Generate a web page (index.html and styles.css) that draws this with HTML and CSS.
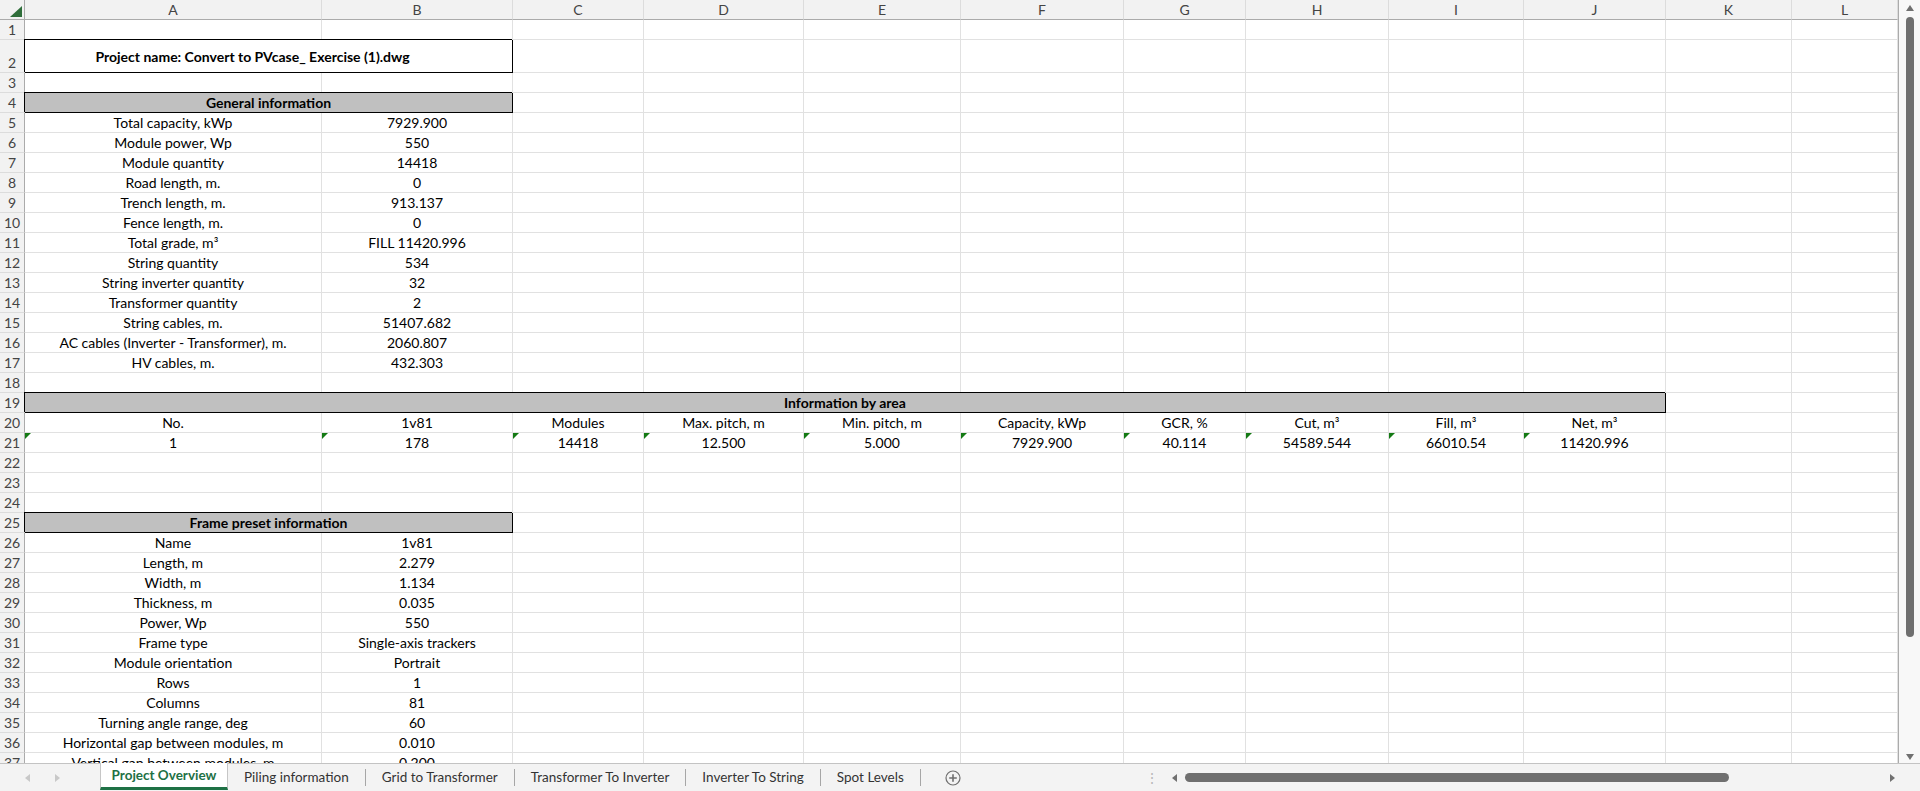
FILE: index.html
```html
<!DOCTYPE html>
<html>
<head>
<meta charset="utf-8">
<title>Project Overview</title>
<link rel="stylesheet" href="styles.css">
</head>
<body>
<div class="app">
  <div class="main">
    <div class="sheet">
      <div class="r hd">
        <div class="corner"><svg width="12" height="11" viewBox="0 0 12 11"><polygon points="12,0 12,11 0,11" fill="#2f6e3a"/></svg></div>
        <div>A</div><div>B</div><div>C</div><div>D</div><div>E</div><div>F</div><div>G</div><div>H</div><div>I</div><div>J</div><div>K</div><div>L</div>
      </div>
      <div class="r"><div class="n">1</div><div></div><div></div><div></div><div></div><div></div><div></div><div></div><div></div><div></div><div></div><div></div><div></div></div>
      <div class="r tall"><div class="n">2</div><div class="box span2 bd title">Project name: Convert to PVcase_ Exercise (1).dwg</div><div></div><div></div><div></div><div></div><div></div><div></div><div></div><div></div><div></div><div></div></div>
      <div class="r"><div class="n">3</div><div></div><div></div><div></div><div></div><div></div><div></div><div></div><div></div><div></div><div></div><div></div><div></div></div>
      <div class="r"><div class="n">4</div><div class="box span2 fill bd">General information</div><div></div><div></div><div></div><div></div><div></div><div></div><div></div><div></div><div></div><div></div></div>
      <div class="r"><div class="n">5</div><div>Total capacity, kWp</div><div>7929.900</div><div></div><div></div><div></div><div></div><div></div><div></div><div></div><div></div><div></div><div></div></div>
      <div class="r"><div class="n">6</div><div>Module power, Wp</div><div>550</div><div></div><div></div><div></div><div></div><div></div><div></div><div></div><div></div><div></div><div></div></div>
      <div class="r"><div class="n">7</div><div>Module quantity</div><div>14418</div><div></div><div></div><div></div><div></div><div></div><div></div><div></div><div></div><div></div><div></div></div>
      <div class="r"><div class="n">8</div><div>Road length, m.</div><div>0</div><div></div><div></div><div></div><div></div><div></div><div></div><div></div><div></div><div></div><div></div></div>
      <div class="r"><div class="n">9</div><div>Trench length, m.</div><div>913.137</div><div></div><div></div><div></div><div></div><div></div><div></div><div></div><div></div><div></div><div></div></div>
      <div class="r"><div class="n">10</div><div>Fence length, m.</div><div>0</div><div></div><div></div><div></div><div></div><div></div><div></div><div></div><div></div><div></div><div></div></div>
      <div class="r"><div class="n">11</div><div>Total grade, m³</div><div>FILL 11420.996</div><div></div><div></div><div></div><div></div><div></div><div></div><div></div><div></div><div></div><div></div></div>
      <div class="r"><div class="n">12</div><div>String quantity</div><div>534</div><div></div><div></div><div></div><div></div><div></div><div></div><div></div><div></div><div></div><div></div></div>
      <div class="r"><div class="n">13</div><div>String inverter quantity</div><div>32</div><div></div><div></div><div></div><div></div><div></div><div></div><div></div><div></div><div></div><div></div></div>
      <div class="r"><div class="n">14</div><div>Transformer quantity</div><div>2</div><div></div><div></div><div></div><div></div><div></div><div></div><div></div><div></div><div></div><div></div></div>
      <div class="r"><div class="n">15</div><div>String cables, m.</div><div>51407.682</div><div></div><div></div><div></div><div></div><div></div><div></div><div></div><div></div><div></div><div></div></div>
      <div class="r"><div class="n">16</div><div>AC cables (Inverter - Transformer), m.</div><div>2060.807</div><div></div><div></div><div></div><div></div><div></div><div></div><div></div><div></div><div></div><div></div></div>
      <div class="r"><div class="n">17</div><div>HV cables, m.</div><div>432.303</div><div></div><div></div><div></div><div></div><div></div><div></div><div></div><div></div><div></div><div></div></div>
      <div class="r"><div class="n">18</div><div></div><div></div><div></div><div></div><div></div><div></div><div></div><div></div><div></div><div></div><div></div><div></div></div>
      <div class="r"><div class="n">19</div><div class="box span10 fill bd">Information by area</div><div></div><div></div></div>
      <div class="r"><div class="n">20</div><div>No.</div><div>1v81</div><div>Modules</div><div>Max. pitch, m</div><div>Min. pitch, m</div><div>Capacity, kWp</div><div>GCR, %</div><div>Cut, m³</div><div>Fill, m³</div><div>Net, m³</div><div></div><div></div></div>
      <div class="r"><div class="n">21</div><div class="t">1</div><div class="t">178</div><div class="t">14418</div><div class="t">12.500</div><div class="t">5.000</div><div class="t">7929.900</div><div class="t">40.114</div><div class="t">54589.544</div><div class="t">66010.54</div><div class="t">11420.996</div><div></div><div></div></div>
      <div class="r"><div class="n">22</div><div></div><div></div><div></div><div></div><div></div><div></div><div></div><div></div><div></div><div></div><div></div><div></div></div>
      <div class="r"><div class="n">23</div><div></div><div></div><div></div><div></div><div></div><div></div><div></div><div></div><div></div><div></div><div></div><div></div></div>
      <div class="r"><div class="n">24</div><div></div><div></div><div></div><div></div><div></div><div></div><div></div><div></div><div></div><div></div><div></div><div></div></div>
      <div class="r"><div class="n">25</div><div class="box span2 fill bd">Frame preset information</div><div></div><div></div><div></div><div></div><div></div><div></div><div></div><div></div><div></div><div></div></div>
      <div class="r"><div class="n">26</div><div>Name</div><div>1v81</div><div></div><div></div><div></div><div></div><div></div><div></div><div></div><div></div><div></div><div></div></div>
      <div class="r"><div class="n">27</div><div>Length, m</div><div>2.279</div><div></div><div></div><div></div><div></div><div></div><div></div><div></div><div></div><div></div><div></div></div>
      <div class="r"><div class="n">28</div><div>Width, m</div><div>1.134</div><div></div><div></div><div></div><div></div><div></div><div></div><div></div><div></div><div></div><div></div></div>
      <div class="r"><div class="n">29</div><div>Thickness, m</div><div>0.035</div><div></div><div></div><div></div><div></div><div></div><div></div><div></div><div></div><div></div><div></div></div>
      <div class="r"><div class="n">30</div><div>Power, Wp</div><div>550</div><div></div><div></div><div></div><div></div><div></div><div></div><div></div><div></div><div></div><div></div></div>
      <div class="r"><div class="n">31</div><div>Frame type</div><div>Single-axis trackers</div><div></div><div></div><div></div><div></div><div></div><div></div><div></div><div></div><div></div><div></div></div>
      <div class="r"><div class="n">32</div><div>Module orientation</div><div>Portrait</div><div></div><div></div><div></div><div></div><div></div><div></div><div></div><div></div><div></div><div></div></div>
      <div class="r"><div class="n">33</div><div>Rows</div><div>1</div><div></div><div></div><div></div><div></div><div></div><div></div><div></div><div></div><div></div><div></div></div>
      <div class="r"><div class="n">34</div><div>Columns</div><div>81</div><div></div><div></div><div></div><div></div><div></div><div></div><div></div><div></div><div></div><div></div></div>
      <div class="r"><div class="n">35</div><div>Turning angle range, deg</div><div>60</div><div></div><div></div><div></div><div></div><div></div><div></div><div></div><div></div><div></div><div></div></div>
      <div class="r"><div class="n">36</div><div>Horizontal gap between modules, m</div><div>0.010</div><div></div><div></div><div></div><div></div><div></div><div></div><div></div><div></div><div></div><div></div></div>
      <div class="r"><div class="n">37</div><div>Vertical gap between modules, m</div><div>0.200</div><div></div><div></div><div></div><div></div><div></div><div></div><div></div><div></div><div></div><div></div></div>
    </div>
    <div class="vs">
      <span class="arr-up"></span>
      <span class="vthumb"></span>
      <span class="grow"></span>
      <span class="arr-down"></span>
    </div>
  </div>
  <div class="tabs">
    <div class="nav"><span class="arr-l light"></span><span class="arr-r light"></span></div>
    <div class="tab active">Project Overview</div>
    <div class="tab">Piling information</div><span class="sep"></span>
    <div class="tab">Grid to Transformer</div><span class="sep"></span>
    <div class="tab">Transformer To Inverter</div><span class="sep"></span>
    <div class="tab">Inverter To String</div><span class="sep"></span>
    <div class="tab">Spot Levels</div><span class="sep"></span>
    <div class="add"><svg width="16" height="16" viewBox="0 0 16 16"><circle cx="8" cy="8" r="7" fill="none" stroke="#6f6f6f" stroke-width="1.2"/><path d="M8 4.2v7.6M4.2 8h7.6" stroke="#6f6f6f" stroke-width="1.6"/></svg></div>
    <div class="hs">
      <span class="dots">⋮</span>
      <span class="arr-l"></span>
      <span class="hthumb"></span>
      <span class="grow"></span>
      <span class="arr-r"></span>
    </div>
  </div>
</div>
</body>
</html>
```
FILE: styles.css
```css
* { box-sizing: border-box; margin: 0; padding: 0; }
html, body { width: 1920px; height: 791px; overflow: hidden; background: #fff; }
body { font-family: Lato, "Open Sans", "Liberation Sans", sans-serif; font-size: 14px; color: #000; }

.app { display: flex; flex-direction: column; height: 791px; }
.main { display: flex; height: 763px; }
.sheet { width: 1898px; height: 763px; overflow: hidden; }

.r {
  display: grid;
  grid-template-columns: 25px 297px 191px 131px 160px 157px 163px 122px 143px 135px 142px 126px 106px;
  height: 20px;
}
.r > div {
  position: relative;
  border-right: 1px solid #e1e1e1;
  border-bottom: 1px solid #e1e1e1;
  display: flex;
  align-items: flex-end;
  justify-content: center;
  padding-bottom: 1px;
  line-height: 16px;
  white-space: nowrap;
}
.r > .n {
  background: #f2f2f2;
  border-right-color: #ababab;
  border-bottom-color: #dcdcdc;
  color: #444;
  font-size: 14px;
}
.hd > div {
  background: #f2f2f2;
  border-bottom-color: #ababab;
  border-right-color: #dcdcdc;
  color: #444;
  align-items: center;
  padding: 0;
}
.hd > .corner {
  border-right-color: #ababab;
  align-items: flex-end;
  justify-content: flex-end;
  padding: 0 2px 2px 0;
}
.corner svg { display: block; }

.r.tall { height: 33px; }
.r > .title { align-items: center; padding: 2px 32px 0 0; }

.r > .box {
  border-right: 1px solid #000;
  border-bottom: 1px solid #000;
  box-shadow: -1px -1px 0 #000;
}
.span2 { grid-column: span 2; }
.span10 { grid-column: span 10; }
.fill { background: #c0c0c0; }
.bd { font-weight: 700; }

.r > .t::before {
  content: "";
  position: absolute;
  top: 0;
  left: 0;
  width: 0;
  height: 0;
  border-top: 6px solid #147a14;
  border-right: 6px solid transparent;
}

/* vertical scrollbar */
.vs {
  width: 22px;
  height: 763px;
  background: #f8f8f8;
  border-left: 1px solid #ababab;
  display: flex;
  flex-direction: column;
  align-items: center;
}
.arr-up { margin-top: 5px; width: 0; height: 0; border-left: 4px solid transparent; border-right: 4px solid transparent; border-bottom: 6px solid #707070; }
.arr-down { margin-bottom: 3px; width: 0; height: 0; border-left: 4px solid transparent; border-right: 4px solid transparent; border-top: 6px solid #707070; }
.vthumb { margin-top: 6px; width: 8px; height: 620px; border-radius: 4px; background: #6f6f6f; }
.grow { flex: 1; }

/* tab bar */
.tabs {
  height: 28px;
  display: flex;
  align-items: stretch;
  background: #f3f3f3;
  border-top: 1px solid #c3c3c3;
  font-size: 13.5px;
  color: #333;
}
.nav { width: 100px; display: flex; align-items: center; padding-left: 25px; gap: 25px; }
.arr-l { width: 0; height: 0; border-top: 4px solid transparent; border-bottom: 4px solid transparent; border-right: 5px solid #707070; }
.arr-r { width: 0; height: 0; border-top: 4px solid transparent; border-bottom: 4px solid transparent; border-left: 5px solid #707070; }
.arr-l.light { border-right-color: #c8c8c8; }
.arr-r.light { border-left-color: #c8c8c8; }
.nav .arr-l, .nav .arr-r { align-self: center; }

.tab { display: flex; align-items: center; padding: 0 16px 2px; white-space: nowrap; }
.tab.active {
  width: 128px;
  justify-content: center;
  padding: 0;
  margin-top: -1px;
  height: 27px;
  background: #fff;
  border-left: 1px solid #c6c6c6;
  border-right: 1px solid #c6c6c6;
  border-bottom: 3px solid #1e7145;
  color: #1e7145;
  font-weight: 700;
}
.sep { align-self: center; width: 1px; height: 17px; background: #a6a6a6; }
.add { display: flex; align-items: center; margin-left: 24px; }
.add svg { display: block; }

.hs {
  margin-left: auto;
  width: 781px;
  display: flex;
  align-items: center;
}
.dots { width: 26px; text-align: center; color: #b8b8b8; font-size: 14px; }
.hs .arr-l { margin-left: 7px; }
.hthumb { margin-left: 8px; width: 544px; height: 9px; border-radius: 4.5px; background: #6f6f6f; }
.hs .arr-r { margin-right: 25px; }
```
